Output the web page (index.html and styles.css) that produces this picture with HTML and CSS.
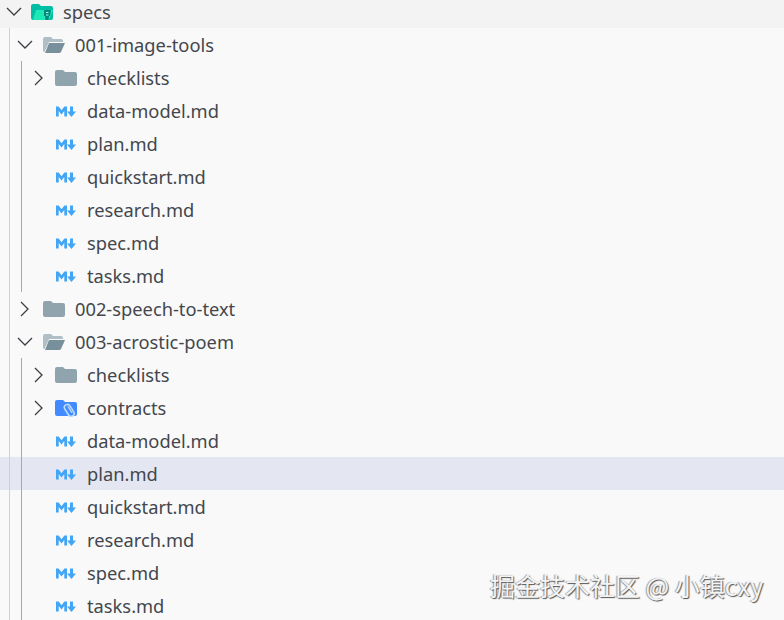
FILE: index.html
```html
<!DOCTYPE html>
<html lang="en">
<head>
    <meta charset="UTF-8">
    <title>specs</title>
    <link rel="stylesheet" href="styles.css">
</head>
<body>
    <svg class="defs" width="0" height="0">
        <symbol id="chev-down" viewBox="0 0 16 16"><path d="M1 4 8 11l7-7" fill="none" stroke="#3b3f44" stroke-width="1.300"/></symbol>
        <symbol id="chev-right" viewBox="0 0 16 16"><path d="M4 1l7 7-7 7" fill="none" stroke="#3b3f44" stroke-width="1.300"/></symbol>
        <symbol id="folder" viewBox="0 0 22 18"><path d="M0 3q0-2 2-2h6l2 2h10q2 0 2 2v10q0 2-2 2H2q-2 0-2-2z" fill="#90a4ae"/></symbol>
        <symbol id="folder-open" viewBox="0 0 22 18"><path d="M0 3q0-2 2-2h6l2 2h8q2 0 2 2v1H6L1.500 16H1q-1 0-1-2z" fill="#b0bec5"/><path d="M6 7h16l-4 9q-.5 1-2 1H2z" fill="#78909c"/></symbol>
        <symbol id="md" viewBox="0 0 20 11"><path d="M0 10.500V.5h2.600L5.500 4.200 8.400.5H11v10H8.300V5L5.500 8.400 2.700 5v5.500z" fill="#42a5f5"/><path d="M14 .5h3v5h3l-4.500 5.500L11 5.500h3z" fill="#42a5f5"/></symbol>
    </svg>

    <div class="tree">
        <div class="row top">
            <svg class="chev"><use href="#chev-down"/></svg>
            <svg class="icon" viewBox="0 0 22 18">
                <path d="M0 3q0-2 2-2h6l2 2h10q2 0 2 2v10q0 2-2 2H2q-2 0-2-2z" fill="#00bfa5"/>
                <path d="M5 7h17l-4 10H2z" fill="#1de9b6"/>
                <path d="M13 7h7l-1 6h-1l-.5 4h-3l-.5-4h-1z" fill="#00897b"/>
                <path d="M15 9.500h2.500M15 12h2.500" stroke="#a7ffeb" stroke-width="1"/>
            </svg>
            <span>specs</span>
        </div>
        <div class="group">
            <div class="row">
                <svg class="chev"><use href="#chev-down"/></svg>
                <svg class="icon"><use href="#folder-open"/></svg>
                <span>001-image-tools</span>
            </div>
            <div class="group inner">
                <div class="row">
                    <svg class="chev"><use href="#chev-right"/></svg>
                    <svg class="icon"><use href="#folder"/></svg>
                    <span>checklists</span>
                </div>
                <div class="row file"><svg class="md"><use href="#md"/></svg><span>data-model.md</span></div>
                <div class="row file"><svg class="md"><use href="#md"/></svg><span>plan.md</span></div>
                <div class="row file"><svg class="md"><use href="#md"/></svg><span>quickstart.md</span></div>
                <div class="row file"><svg class="md"><use href="#md"/></svg><span>research.md</span></div>
                <div class="row file"><svg class="md"><use href="#md"/></svg><span>spec.md</span></div>
                <div class="row file"><svg class="md"><use href="#md"/></svg><span>tasks.md</span></div>
            </div>
            <div class="row">
                <svg class="chev"><use href="#chev-right"/></svg>
                <svg class="icon"><use href="#folder"/></svg>
                <span>002-speech-to-text</span>
            </div>
            <div class="row">
                <svg class="chev"><use href="#chev-down"/></svg>
                <svg class="icon"><use href="#folder-open"/></svg>
                <span>003-acrostic-poem</span>
            </div>
            <div class="group inner">
                <div class="row">
                    <svg class="chev"><use href="#chev-right"/></svg>
                    <svg class="icon"><use href="#folder"/></svg>
                    <span>checklists</span>
                </div>
                <div class="row">
                    <svg class="chev"><use href="#chev-right"/></svg>
                    <svg class="icon" viewBox="0 0 22 18">
                        <path d="M0 3q0-2 2-2h6l2 2h10q2 0 2 2v10q0 2-2 2H2q-2 0-2-2z" fill="#448aff"/>
                        <rect x="11" y="5" width="6" height="13" rx="3" transform="rotate(-32 14 11)" fill="none" stroke="#bbdefb" stroke-width="1.600"/>
                        <path d="M13 7.500l4 6.500" stroke="#bbdefb" stroke-width="1.400"/>
                    </svg>
                    <span>contracts</span>
                </div>
                <div class="row file"><svg class="md"><use href="#md"/></svg><span>data-model.md</span></div>
                <div class="row file selected"><svg class="md"><use href="#md"/></svg><span>plan.md</span></div>
                <div class="row file"><svg class="md"><use href="#md"/></svg><span>quickstart.md</span></div>
                <div class="row file"><svg class="md"><use href="#md"/></svg><span>research.md</span></div>
                <div class="row file"><svg class="md"><use href="#md"/></svg><span>spec.md</span></div>
                <div class="row file"><svg class="md"><use href="#md"/></svg><span>tasks.md</span></div>
            </div>
        </div>
    </div>

    <div class="watermark">掘金技术社区 @ 小镇cxy</div>
</body>
</html>
```

FILE: styles.css
```css
html, body {
    margin: 0;
    padding: 0;
    height: 100%;
    overflow: hidden;
}
body {
    font-family: "Noto Sans", "Open Sans", sans-serif;
    background-color: #f9f9f9;
    color: #43474d;
    position: relative;
}
.defs {
    position: absolute;
}
.tree {
    margin-top: -5px;
}
.row {
    display: flex;
    align-items: center;
    height: 33px;
    font-size: 18.300px;
    position: relative;
    padding-left: 6px;
}
.row.top {
    background-color: #f3f3f3;
}
.chev {
    width: 16px;
    height: 16px;
    flex-shrink: 0;
    margin-right: 9px;
}
.icon {
    width: 22px;
    height: 18px;
    flex-shrink: 0;
    margin-right: 10px;
}
.group {
    border-left: 1px solid #d0d0d0;
    margin-left: 9px;
}
.group .row {
    padding-left: 7px;
}
.group .row .chev {
    margin-right: 10px;
}
.group.inner {
    margin-left: 11px;
    border-left: 1px solid #a8a8a8;
}
.group.inner .row {
    padding-left: 9px;
}
.group.inner .row .chev {
    margin-right: 8px;
}
.group.inner .row.file {
    padding-left: 34px;
}
.md {
    width: 20px;
    height: 11px;
    flex-shrink: 0;
    margin-top: 2px;
    margin-right: 11px;
}
.selected::before {
    content: "";
    position: absolute;
    top: 0;
    bottom: 0;
    left: -22px;
    right: 0;
    z-index: -1;
    background-color: #e4e6f1;
}
.watermark {
    position: absolute;
    left: 490px;
    top: 567px;
    font-family: "Noto Sans CJK SC", "Noto Sans", sans-serif;
    font-size: 25px;
    color: #f4f4f4;
    text-shadow: 1px 1px 1px #555, -1px 0 1px #999;
    white-space: nowrap;
}
```
